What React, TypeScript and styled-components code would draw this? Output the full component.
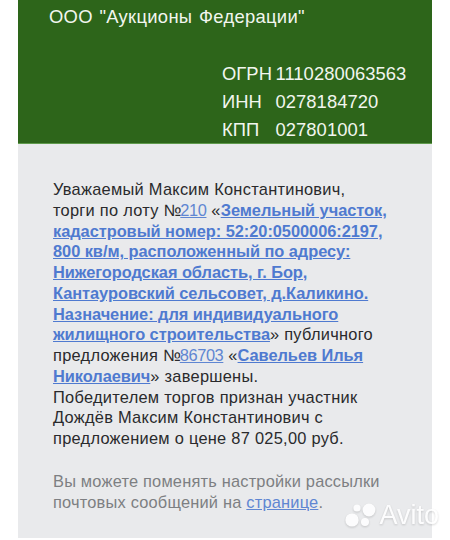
import { createGlobalStyle } from "styled-components";
import styled from "styled-components";

const GlobalStyle = createGlobalStyle`
  html, body {
    margin: 0;
    padding: 0;
    background: #fff;
  }
  body {
    font-family: "Liberation Sans", Arial, sans-serif;
  }
`;

const requisites = [
  { label: "ОГРН", value: "1110280063563" },
  { label: "ИНН", value: "0278184720" },
  { label: "КПП", value: "027801001" },
];

export default function App() {
  return (
    <>
      <GlobalStyle />
      <Page>
        <Card>
          <Header>
            <CompanyName>ООО "Аукционы Федерации"</CompanyName>
            <Requisites>
              {requisites.map((item) => (
                <RequisiteRow key={item.label}>
                  <RequisiteLabel>{item.label}</RequisiteLabel>
                  <span>{item.value}</span>
                </RequisiteRow>
              ))}
            </Requisites>
          </Header>
          <Body>
            <Message>
              Уважаемый Максим Константинович,
              <br />
              торги по лоту <NumberSign>№</NumberSign>
              <PlainLink $tight>210</PlainLink> «
              <BoldLink>
                Земельный участок,
                <br />
                кадастровый номер: 52:20:0500006:2197,
                <br />
                800 кв/м, расположенный по адресу:
                <br />
                Нижегородская область, г. Бор,
                <br />
                Кантауровский сельсовет, д.Каликино.
                <br />
                Назначение: для индивидуального
                <br />
                жилищного строительства
              </BoldLink>
              » публичного
              <br />
              предложения <NumberSign>№</NumberSign>
              <PlainLink $tight>86703</PlainLink> «<BoldLink>Савельев Илья</BoldLink>
              <br />
              <BoldLink>Николаевич</BoldLink>» завершены.
              <br />
              Победителем торгов признан участник
              <br />
              Дождёв Максим Константинович с
              <br />
              предложением о цене 87 025,00 руб.
            </Message>
            <Note>
              Вы можете поменять настройки рассылки
              <br />
              почтовых сообщений на <PlainLink>странице</PlainLink>.
            </Note>
          </Body>
        </Card>
        <Watermark>
          <svg width="32" height="26" viewBox="0 0 32 26" fill="#fff">
            <circle cx="7" cy="18" r="6.6" />
            <circle cx="12" cy="6" r="3.6" />
            <circle cx="24" cy="8" r="6.4" />
            <circle cx="20" cy="20" r="4" />
          </svg>
          <WatermarkText>Avito</WatermarkText>
        </Watermark>
      </Page>
    </>
  );
}

const Page = styled.div`
  position: relative;
  width: 450px;
  height: 540px;
  overflow: hidden;
  padding: 0 18px 2px;
  box-sizing: border-box;
`;
const Card = styled.div`
  height: 100%;
  display: flex;
  flex-direction: column;
  background: #e9eaec;
`;
const Header = styled.div`
  height: 144px;
  box-sizing: border-box;
  padding: 6px 12px 0 31px;
  background: #2d651a;
  border-bottom: 1px solid #5f9a4c;
  color: #f2f6ef;
  font-size: 18.4px;
`;
const CompanyName = styled.div`
  line-height: 22px;
  letter-spacing: 0.3px;
  word-spacing: 1.2px;
`;
const Requisites = styled.div`
  margin-top: 32px;
  margin-left: 173px;
  letter-spacing: 0.05px;
`;
const RequisiteRow = styled.div`
  display: flex;
  line-height: 27.8px;
`;
const RequisiteLabel = styled.span`
  width: 53.5px;
`;
const Body = styled.div`
  padding: 35px 30px 0 35px;
  font-size: 16.4px;
  line-height: 20.75px;
  letter-spacing: 0.27px;
  white-space: nowrap;
`;
const Message = styled.div`
  color: #2a2a2c;
`;
const Note = styled.div`
  margin-top: 22px;
  color: #7d7f82;
  letter-spacing: 0.2px;
`;
const NumberSign = styled.span`
  letter-spacing: -0.8px;
`;
const PlainLink = styled.span<{ $tight?: boolean }>`
  color: #5f86d2;
  letter-spacing: ${(p) => (p.$tight ? "-0.4px" : "0.2px")};
  text-decoration: underline;
`;
const BoldLink = styled.span`
  color: #4f7ad0;
  font-weight: 700;
  letter-spacing: -0.05px;
  text-decoration: underline;
`;
const Watermark = styled.div`
  position: absolute;
  right: 11px;
  bottom: 12px;
  display: flex;
  align-items: center;
  gap: 2px;
  opacity: 0.9;
  filter: drop-shadow(0 1px 1px rgba(0, 0, 0, 0.18));
`;
const WatermarkText = styled.span`
  color: #fff;
  font-size: 27px;
  line-height: 26px;
`;
